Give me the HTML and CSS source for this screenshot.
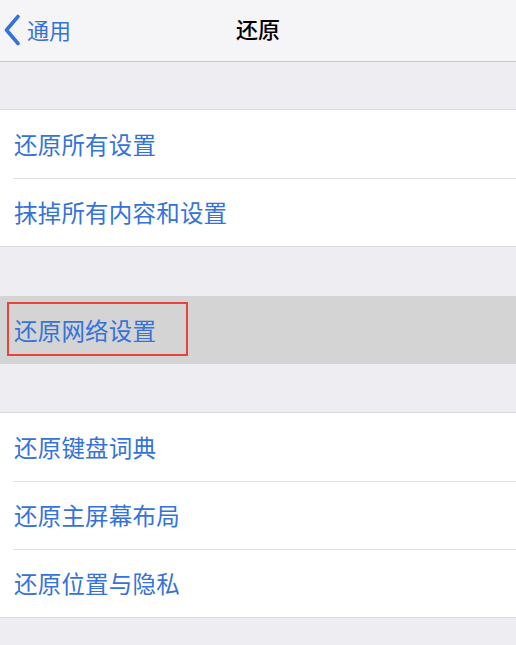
FILE: index.html
```html
<!DOCTYPE html>
<html lang="zh-CN">
<head>
  <meta charset="UTF-8" />
  <meta name="viewport" content="width=device-width, initial-scale=1.0" />
  <title>还原</title>
  <link rel="stylesheet" href="styles.css">
</head>
<body>
  <div class="navbar">
    <a href="#" class="back">
      <svg class="chevron" width="18" height="32" viewBox="0 0 18 32">
        <path d="M15 2.5 L3.5 16 L15 29.5" fill="none" stroke="#3572d9" stroke-width="3.6" stroke-linecap="round" stroke-linejoin="round"/>
      </svg>
      <span>通用</span>
    </a>
    <div class="title">还原</div>
  </div>

  <div class="spacer first"></div>
  <ul class="group">
    <li><a href="#">还原所有设置</a></li>
    <li><a href="#">抹掉所有内容和设置</a></li>
  </ul>

  <div class="spacer wide"></div>
  <ul class="group active-group">
    <li class="selected">
      <a href="#">还原网络设置</a>
      <div class="mark"></div>
    </li>
  </ul>

  <div class="spacer"></div>
  <ul class="group">
    <li><a href="#">还原键盘词典</a></li>
    <li><a href="#">还原主屏幕布局</a></li>
    <li><a href="#">还原位置与隐私</a></li>
  </ul>
  <div class="spacer"></div>
</body>
</html>
```

FILE: styles.css
```css
body {
  margin: 0;
  background-color: #eeeef2;
  font-family: "Noto Sans CJK SC", "Noto Sans", sans-serif;
  overflow: hidden;
}
.navbar {
  height: 61px;
  background-color: #f5f5f7;
  border-bottom: 1px solid #c9c9cc;
  position: relative;
  display: flex;
  align-items: center;
  justify-content: center;
}
.back {
  position: absolute;
  left: 3px;
  top: 0;
  height: 58px;
  display: flex;
  align-items: center;
  gap: 6px;
  color: #3572d9;
  text-decoration: none;
  font-size: 22px;
}
.chevron {
  display: block;
  margin-top: 2px;
}
.title {
  font-size: 22px;
  font-weight: 500;
  color: #000;
  margin-top: -5px;
}
.spacer {
  height: 48px;
}
.spacer.first {
  height: 47px;
}
.spacer.wide {
  height: 49px;
}
.group {
  list-style-type: none;
  margin: 0;
  padding: 0;
  background-color: #fff;
  border-top: 1px solid #dcdce0;
  border-bottom: 1px solid #dcdce0;
}
.group li {
  height: 68px;
  display: flex;
  align-items: center;
  padding-left: 14px;
  position: relative;
}
.group li + li::before {
  content: "";
  position: absolute;
  left: 13px;
  right: 0;
  top: 0;
  border-top: 1px solid #e2e2e6;
}
.group li a {
  color: #3572d9;
  text-decoration: none;
  font-size: 23.5px;
  letter-spacing: 0.2px;
}
.active-group {
  background-color: #d4d4d4;
  border: none;
}
.mark {
  position: absolute;
  left: 7px;
  top: 6px;
  width: 177px;
  height: 50px;
  border: 2px solid #e8423c;
}
```
